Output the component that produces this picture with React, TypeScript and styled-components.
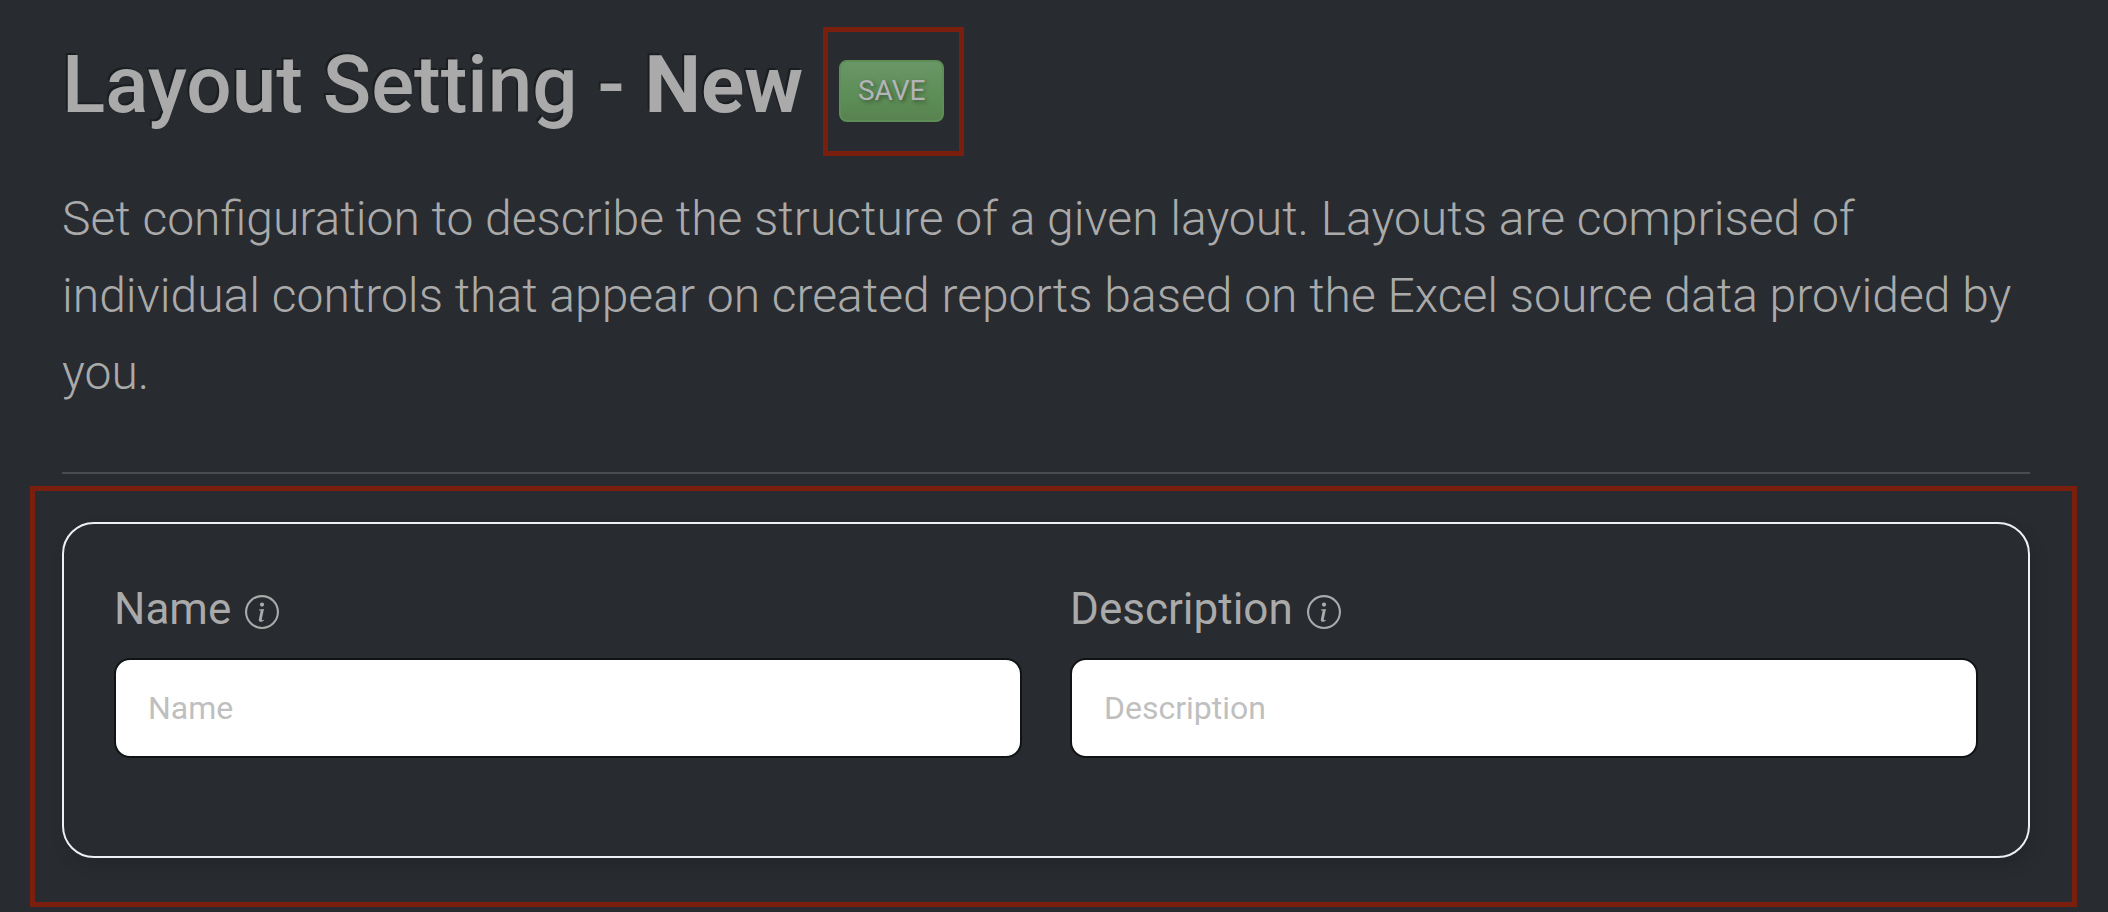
import React from 'react';
import styled, { createGlobalStyle } from 'styled-components';
import { BsInfoCircle } from 'react-icons/bs';

const GlobalStyle = createGlobalStyle`
  *, *::before, *::after { box-sizing: border-box; }
  body {
    margin: 0;
    background: #282b30;
    color: #aaaaaa;
    font-family: Roboto, "Liberation Sans", sans-serif;
  }
`;

const Page = styled.main`
  padding: 27px 31px 5px 30px;
`;

const Intro = styled.header`
  margin: 0 47px 12px 32px;
  border-bottom: 2px solid #494c50;
  padding-bottom: 61px;
`;

const TitleRow = styled.div`
  display: flex;
  align-items: flex-start;
  gap: 20px;
`;

const Title = styled.h1`
  margin: 0;
  padding-top: 10px;
  font-size: 80px;
  font-weight: 500;
  line-height: 96px;
  white-space: nowrap;
  text-shadow: -2px -2px 0 rgba(0, 0, 0, 0.3);

  strong { font-weight: 700; }
`;

const Highlight = styled.div<{ $pad: string }>`
  border: 5px solid #7a1e0e;
  padding: ${(p) => p.$pad};
`;

const SaveButton = styled.button`
  display: block;
  height: 62px;
  padding: 0 17px;
  border: 2px solid #5c8e56;
  border-radius: 8px;
  background: linear-gradient(#6a9666, #5d8e57 60%, #588350);
  color: #b4b4b8;
  font: 400 28px/42px Roboto, "Liberation Sans", sans-serif;
  text-shadow: 2px 2px 4px rgba(0, 0, 0, 0.4);
  cursor: pointer;
`;

const Lead = styled.p`
  margin: 24px 0 0;
  font-size: 48px;
  font-weight: 300;
  line-height: 77px;
`;

const Card = styled.form`
  display: grid;
  grid-template-columns: 1fr 1fr;
  gap: 48px;
  padding: 52px 50px 98px;
  border: 2px solid #eef1f3;
  border-radius: 32px;
  box-shadow: 4px 8px 16px rgba(0, 0, 0, 0.12);
`;

const Field = styled.div`
  min-width: 0;
`;

const LabelRow = styled.div`
  display: flex;
  align-items: center;
  gap: 14px;
  margin-bottom: 16px;
`;

const Label = styled.label`
  font-size: 44px;
  font-weight: 400;
  line-height: 66px;
`;

const InfoIcon = styled(BsInfoCircle)`
  width: 34px;
  height: 34px;
  margin-top: 6px;
`;

const TextInput = styled.input`
  display: block;
  width: 100%;
  height: 100px;
  padding: 0 32px;
  border: 2px solid #111214;
  border-radius: 16px;
  background: #ffffff;
  color: #282b30;
  font: 400 32px/48px Roboto, "Liberation Sans", sans-serif;

  &::placeholder { color: #bfbfbf; opacity: 1; }
`;

const fields = [
  { id: 'layout-name', label: 'Name' },
  { id: 'layout-description', label: 'Description' },
];

export default function App() {
  return (
    <Page>
      <GlobalStyle />
      <Intro>
        <TitleRow>
          <Title>
            Layout Setting - <strong>New</strong>
          </Title>
          <Highlight $pad="28px 15px 29px 11px">
            <SaveButton type="submit" form="layout-form">SAVE</SaveButton>
          </Highlight>
        </TitleRow>
        <Lead>
          Set configuration to describe the structure of a given layout. Layouts are comprised of
          individual controls that appear on created reports based on the Excel source data provided
          by you.
        </Lead>
      </Intro>
      <Highlight $pad="31px 42px 44px 27px">
        <Card id="layout-form" onSubmit={(e) => e.preventDefault()}>
          {fields.map((f) => (
            <Field key={f.id}>
              <LabelRow>
                <Label htmlFor={f.id}>{f.label}</Label>
                <InfoIcon aria-hidden="true" />
              </LabelRow>
              <TextInput id={f.id} type="text" placeholder={f.label} />
            </Field>
          ))}
        </Card>
      </Highlight>
    </Page>
  );
}
